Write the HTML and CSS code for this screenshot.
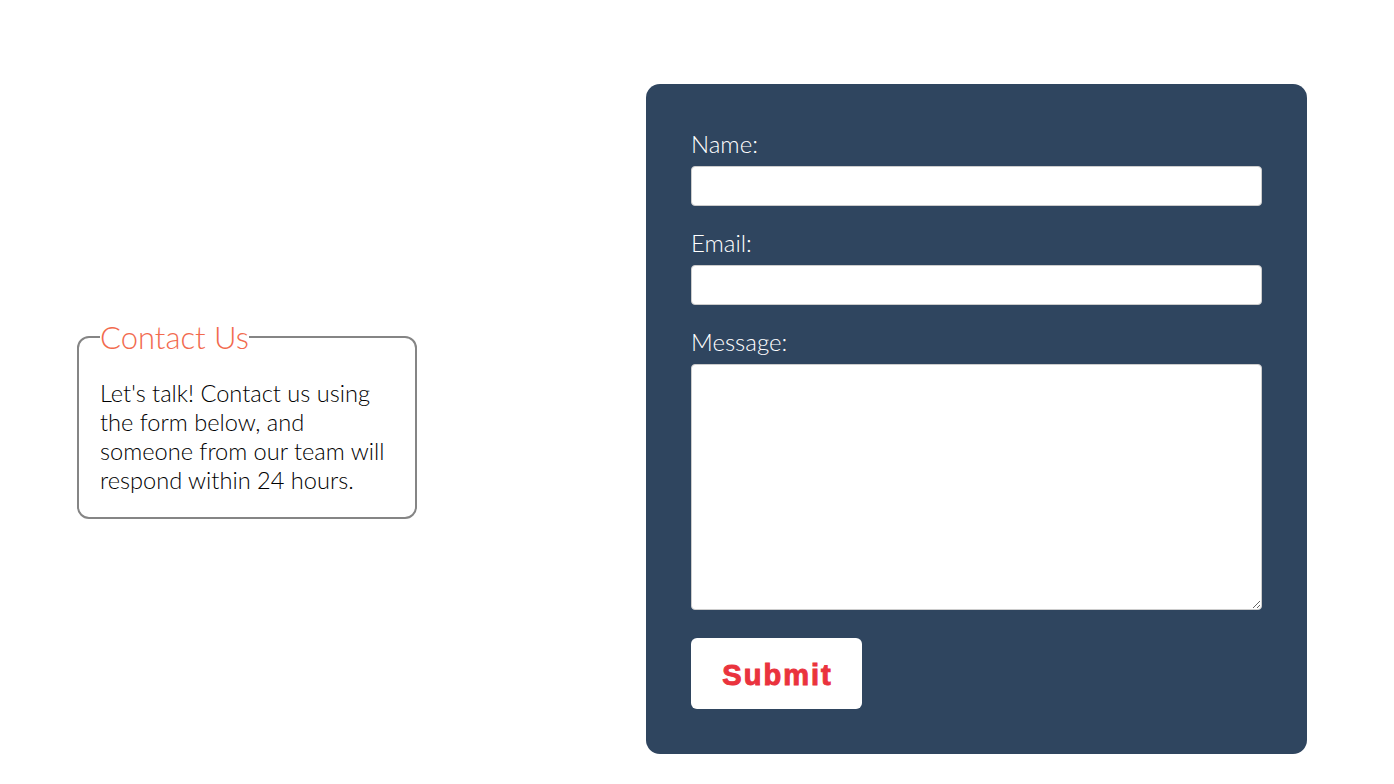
FILE: index.html
```html
<!DOCTYPE html>
<html lang="en">
<head>
<meta charset="utf-8">
<title>Contact Us</title>
<link rel="stylesheet" href="styles.css">
</head>
<body>
<main class="page">
  <fieldset class="intro">
    <legend class="intro-title">Contact Us</legend>
    <p class="intro-text">Let's talk! Contact us using the form below, and someone from our team will respond within 24 hours.</p>
  </fieldset>
  <form class="contact-form">
    <label class="field-label" for="name">Name:</label>
    <input class="field-input" id="name" type="text">
    <label class="field-label" for="email">Email:</label>
    <input class="field-input" id="email" type="email">
    <label class="field-label" for="message">Message:</label>
    <textarea class="field-textarea" id="message"></textarea>
    <button class="submit-btn" type="button">Submit</button>
  </form>
</main>
</body>
</html>
```
FILE: styles.css
```css
* { box-sizing: border-box; }
html, body { margin: 0; padding: 0; background: #ffffff; }
body { font-family: "Lato Light", Lato, "Open Sans", sans-serif; font-weight: 300; }

.page {
  display: flex;
  align-items: center;
  padding: 86px 87px 30px 77px;
  gap: 229px;
}

.intro {
  width: 340px;
  margin: 0;
  padding: 27px 19px 22px 21px;
  border: 2px solid #858585;
  border-radius: 12px;
  flex-shrink: 0;
}
.intro-title {
  padding: 0;
  font-size: 31px;
  line-height: 30px;
  color: #f26a4e;
  font-weight: 300;
}
.intro-text {
  margin: 0;
  font-size: 23.6px;
  line-height: 29px;
  color: #000;
}

.contact-form {
  width: 661px;
  flex-shrink: 0;
  margin-top: -2px;
  background: #2f455f;
  border-radius: 14px;
  padding: 47px 45px 45px;
  display: flex;
  flex-direction: column;
}
.field-label {
  display: block;
  font-size: 24px;
  line-height: 26px;
  color: #ffffff;
  margin-bottom: 9px;
}
.field-input {
  display: block;
  width: 100%;
  height: 40px;
  border: 1px solid #cccccc;
  border-radius: 4px;
  background: #fff;
  margin: 0 0 24px;
  font: inherit;
}
.field-textarea {
  display: block;
  width: 100%;
  height: 246px;
  border: 1px solid #cccccc;
  border-radius: 4px;
  background: #fff;
  margin: 0 0 28px;
  font: inherit;
}
.submit-btn {
  align-self: flex-start;
  width: 171px;
  height: 71px;
  border: none;
  border-radius: 6px;
  background: #ffffff;
  color: #ea333d;
  font-family: "Liberation Sans", Arial, sans-serif;
  font-weight: 700;
  font-size: 29px;
  letter-spacing: 2px;
  -webkit-text-stroke: 1px #ea333d;
  padding: 4px 0 0 2px;
}
```
